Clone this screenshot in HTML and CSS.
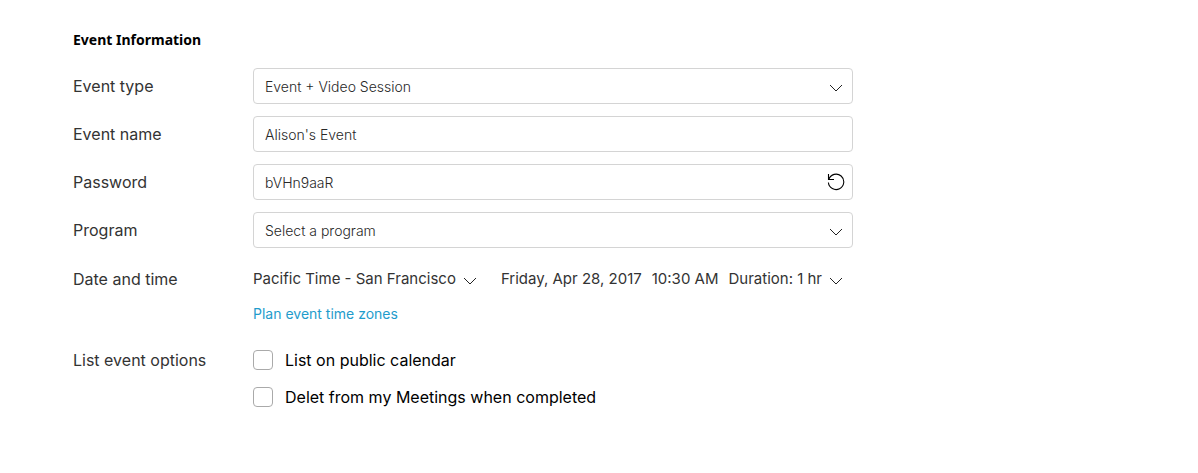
FILE: index.html
```html
<!DOCTYPE html>
<html lang="en">
<head>
<meta charset="utf-8">
<title>Event Information</title>
<link rel="stylesheet" href="styles.css">
</head>
<body>
<form class="event-form">
  <h1 class="title">Event Information</h1>
  <div class="fields">
    <div class="row">
      <label class="label" for="type">Event type</label>
      <div class="control">
        <select class="box" id="type"><option>Event + Video Session</option></select>
        <svg class="chevron" viewBox="0 0 14 8" aria-hidden="true"><path d="M1 1l6 6 6-6"/></svg>
      </div>
    </div>
    <div class="row">
      <label class="label" for="name">Event name</label>
      <div class="control"><input class="box" id="name" type="text" value="Alison's Event"></div>
    </div>
    <div class="row">
      <label class="label" for="password">Password</label>
      <div class="control">
        <input class="box" id="password" type="text" value="bVHn9aaR">
        <button class="refresh" type="button" aria-label="Generate password">
          <svg viewBox="0 0 18 18" aria-hidden="true"><path d="M1.5 1v5.500h5.500M1.800 6.300A7.700 7.700 0 1 1 1.400 9.500"/></svg>
        </button>
      </div>
    </div>
    <div class="row">
      <label class="label" for="program">Program</label>
      <div class="control">
        <select class="box" id="program"><option>Select a program</option></select>
        <svg class="chevron" viewBox="0 0 14 8" aria-hidden="true"><path d="M1 1l6 6 6-6"/></svg>
      </div>
    </div>
  </div>
  <div class="row schedule">
    <span class="label">Date and time</span>
    <div class="when">
      <button class="picker" type="button">Pacific Time - San Francisco
        <svg class="arrow" viewBox="0 0 14 8" aria-hidden="true"><path d="M1 1l6 6 6-6"/></svg></button>
      <button class="picker" type="button"><span>Friday, Apr 28, 2017</span><span>10:30 AM</span><span>Duration: 1 hr</span>
        <svg class="arrow" viewBox="0 0 14 8" aria-hidden="true"><path d="M1 1l6 6 6-6"/></svg></button>
    </div>
  </div>
  <a class="zones" href="#">Plan event time zones</a>
  <div class="row options" role="group" aria-labelledby="options-label">
    <span class="label" id="options-label">List event options</span>
    <div class="checks">
      <label class="check"><input type="checkbox">List on public calendar</label>
      <label class="check"><input type="checkbox">Delet from my Meetings when completed</label>
    </div>
  </div>
</form>
</body>
</html>
```
FILE: styles.css
```css
* {
  box-sizing: border-box;
}

body {
  margin: 0;
  background: #fff;
  color: #333;
  font-family: Inter, "Liberation Sans", sans-serif;
  font-size: 16px;
  line-height: 20px;
}

.event-form {
  max-width: 853px;
  padding: 30px 0 30px 73px;
}

.title {
  margin: 0 0 18px;
  color: #000;
  font: bold 14px/20px "Noto Sans", sans-serif;
}

.fields {
  display: grid;
  gap: 12px;
}

.row {
  display: grid;
  grid-template-columns: 180px 1fr;
  align-items: center;
}

.control {
  position: relative;
}

.box {
  display: block;
  width: 100%;
  height: 36px;
  padding: 0 40px 0 11px;
  border: 1px solid #d4d4d4;
  border-radius: 4px;
  background: #fff;
  color: #282828;
  font: 300 14px/20px Inter, "Liberation Sans", sans-serif;
  appearance: none;
}

select.box {
  padding-top: 2px;
}

.chevron,
.arrow {
  width: 14px;
  height: 8px;
  fill: none;
  stroke: #222;
  stroke-width: 1;
}

.chevron {
  position: absolute;
  top: 16px;
  right: 10px;
  pointer-events: none;
}

button {
  padding: 0;
  border: 0;
  background: none;
  color: inherit;
  font: inherit;
}

.refresh {
  position: absolute;
  top: 9px;
  right: 8px;
  width: 18px;
  height: 18px;
}

.refresh svg {
  display: block;
  width: 18px;
  height: 18px;
  fill: none;
  stroke: #000;
  stroke-width: 1.1;
}

.schedule {
  margin-top: 21px;
}

.when {
  display: flex;
  gap: 24px;
}

.picker {
  display: flex;
  align-items: center;
  gap: 10px;
  font-size: 15px;
  white-space: nowrap;
}

.arrow {
  margin: 4px 0 0 -3px;
}

.zones {
  display: block;
  width: max-content;
  margin: 15px 0 0 180px;
  color: #1f9ccc;
  font-size: 14px;
  text-decoration: none;
}

.options {
  margin-top: 26px;
  align-items: start;
}

.checks {
  display: grid;
  justify-items: start;
  gap: 17px;
}

.check {
  display: flex;
  align-items: center;
  gap: 12px;
  color: #000;
}

.check input {
  width: 20px;
  height: 20px;
  margin: 0;
  border: 1px solid #aaa;
  border-radius: 4px;
  background: #fff;
  appearance: none;
}
```
